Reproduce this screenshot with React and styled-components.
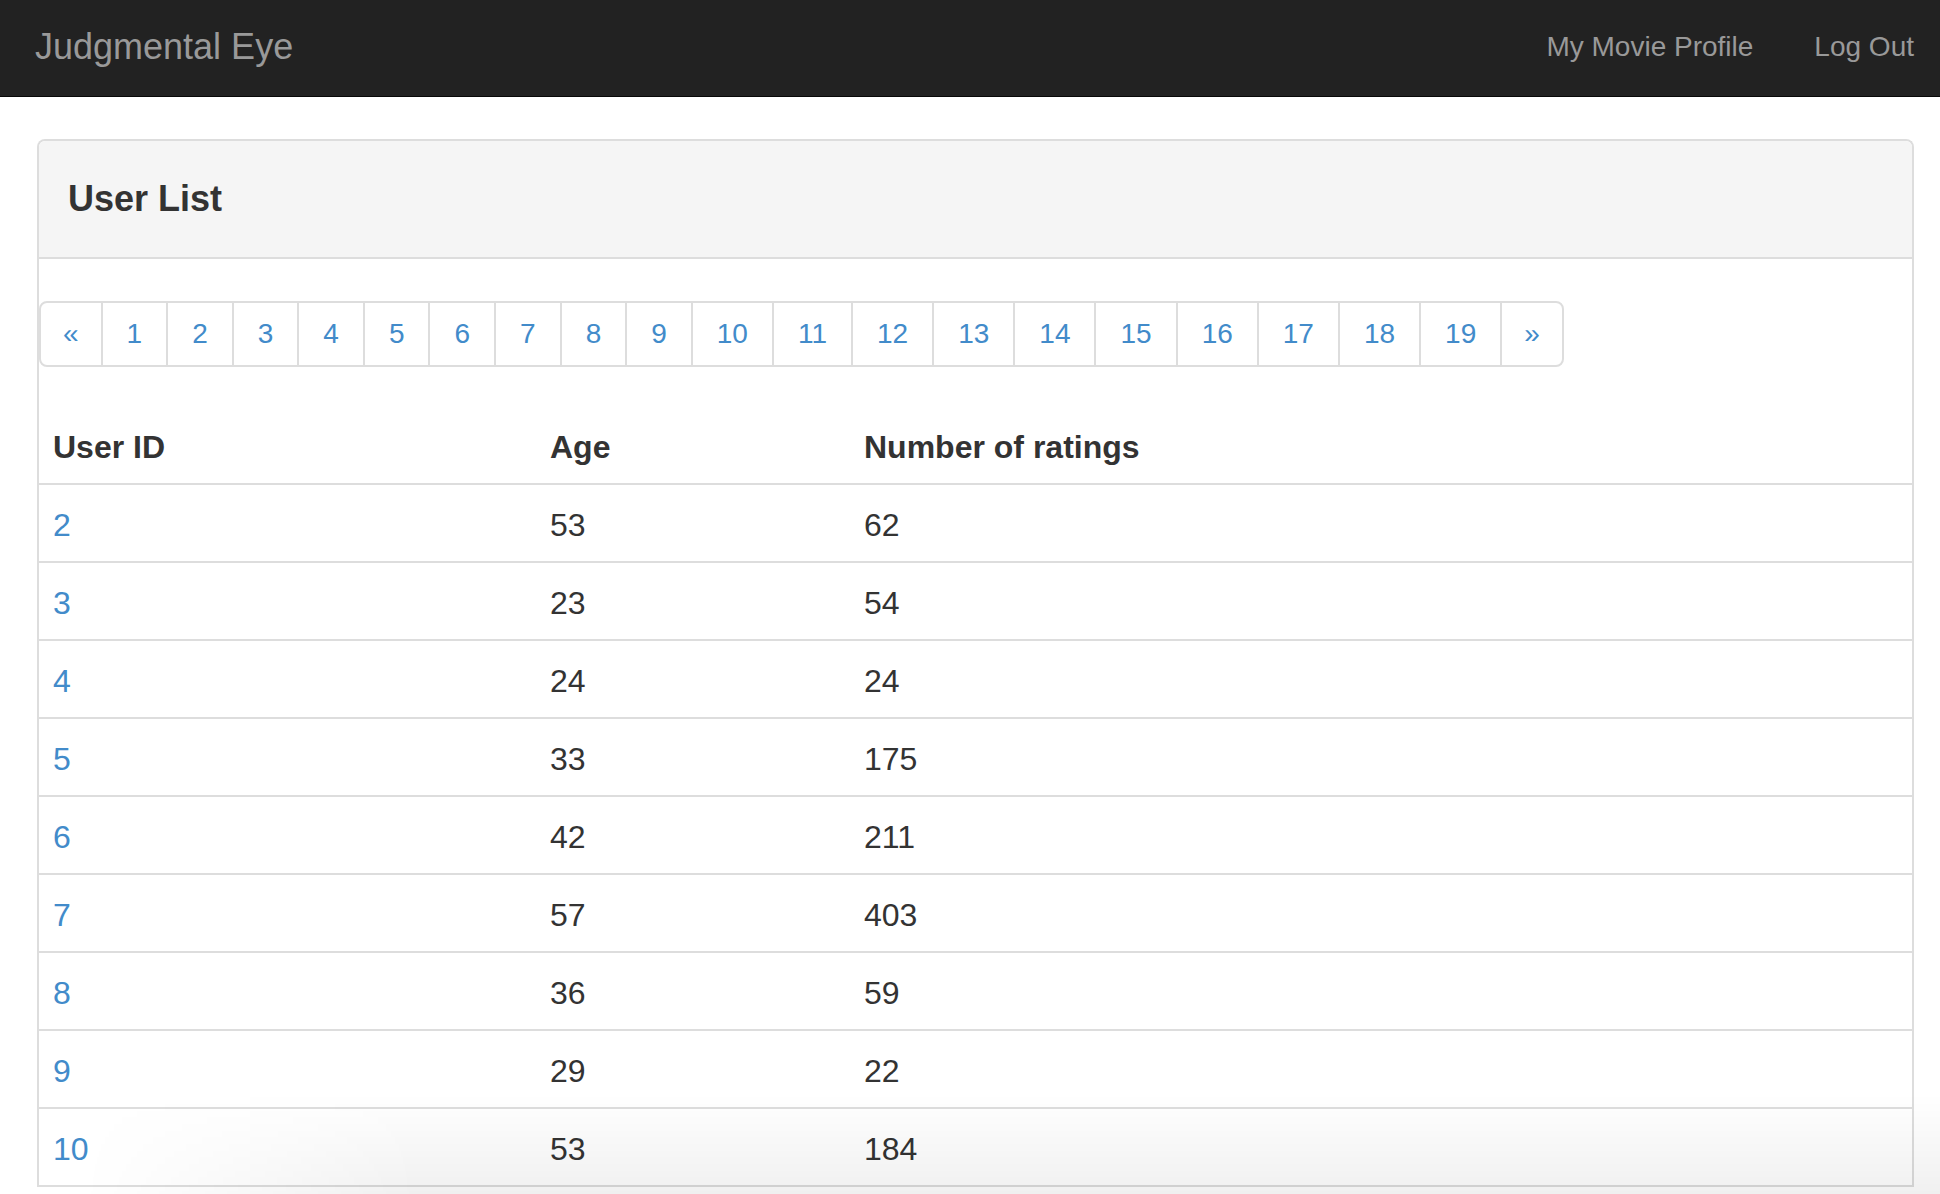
import React from "react";
import styled, { createGlobalStyle } from "styled-components";

const GlobalStyle = createGlobalStyle`
  html, body {
    margin: 0;
    padding: 0;
    overflow: hidden;
    background: #ffffff;
  }
  body {
    font-family: "Liberation Sans", Arial, Helvetica, sans-serif;
    color: #333333;
  }
  * { box-sizing: border-box; }
`;

const Navbar = styled.nav`
  display: flex;
  align-items: center;
  justify-content: space-between;
  height: 97px;
  padding-bottom: 2px;
  background: #222222;
  border-bottom: 1px solid #080808;
`;

const Brand = styled.a`
  padding-left: 35px;
  font-size: 36px;
  color: #999999;
  text-decoration: none;
  white-space: nowrap;
`;

const NavLinks = styled.ul`
  display: flex;
  margin: 0;
  padding: 0 26px 0 0;
  list-style: none;
`;

const NavItem = styled.li`
  padding: 0 0 0 ${(p) => (p.$first ? 0 : 61)}px;
`;

const NavLink = styled.a`
  font-size: 28px;
  color: #999999;
  text-decoration: none;
  white-space: nowrap;
`;

const Main = styled.main`
  padding: 42px 26px 0 37px;
`;

const Panel = styled.section`
  border: 2px solid #dddddd;
  border-bottom: 0;
  border-radius: 8px 8px 0 0;
  background: #ffffff;
  overflow: hidden;
`;

const PanelHeading = styled.header`
  display: flex;
  align-items: center;
  height: 118px;
  padding: 0 29px;
  background: #f5f5f5;
  border-bottom: 2px solid #dddddd;
`;

const PanelTitle = styled.h3`
  margin: 0;
  font-size: 36px;
  font-weight: bold;
  color: #333333;
  line-height: 1;
`;

const Pagination = styled.ul`
  display: inline-flex;
  margin: 42px 0 0 0;
  padding: 0;
  list-style: none;
`;

const PageItem = styled.li`
  margin-left: ${(p) => (p.$first ? 0 : -2)}px;
`;

const PageLink = styled.a`
  display: block;
  padding: 12px ${(p) => (p.$arrow ? 22 : 24)}px;
  font-size: 28px;
  line-height: 38px;
  color: #428bca;
  text-decoration: none;
  background: #ffffff;
  border: 2px solid #dddddd;
  border-radius: ${(p) =>
    p.$first ? "8px 0 0 8px" : p.$last ? "0 8px 8px 0" : "0"};
`;

const Table = styled.table`
  width: 100%;
  margin-top: 40px;
  border-collapse: collapse;
  table-layout: fixed;
  font-size: 32px;
`;

const Th = styled.th`
  width: ${(p) => p.$w || "auto"};
  padding: 18px 14px 14px;
  line-height: 44px;
  text-align: left;
  font-weight: bold;
  color: #333333;
  border-bottom: 2px solid #dddddd;
`;

const Td = styled.td`
  padding: 18px 14px 14px;
  line-height: 44px;
  color: #333333;
  border-bottom: 2px solid #dddddd;
  white-space: nowrap;
`;

const UserLink = styled.a`
  color: #428bca;
  text-decoration: none;
`;

const BottomShade = styled.div`
  position: fixed;
  left: 0;
  right: 0;
  bottom: 0;
  height: 100px;
  pointer-events: none;
  background: linear-gradient(to bottom, rgba(0, 0, 0, 0) 0%, rgba(0, 0, 0, 0.06) 100%);
  -webkit-mask-image: linear-gradient(to right, transparent 80px, #000 420px);
  mask-image: linear-gradient(to right, transparent 80px, #000 420px);
`;

const users = [
  { id: 2, age: 53, ratings: 62 },
  { id: 3, age: 23, ratings: 54 },
  { id: 4, age: 24, ratings: 24 },
  { id: 5, age: 33, ratings: 175 },
  { id: 6, age: 42, ratings: 211 },
  { id: 7, age: 57, ratings: 403 },
  { id: 8, age: 36, ratings: 59 },
  { id: 9, age: 29, ratings: 22 },
  { id: 10, age: 53, ratings: 184 },
];

const pages = Array.from({ length: 19 }, (_, i) => i + 1);

export default function App() {
  return (
    <>
      <GlobalStyle />
      <Navbar>
        <Brand href="#">Judgmental Eye</Brand>
        <NavLinks>
          <NavItem $first>
            <NavLink href="#">My Movie Profile</NavLink>
          </NavItem>
          <NavItem>
            <NavLink href="#">Log Out</NavLink>
          </NavItem>
        </NavLinks>
      </Navbar>
      <Main>
        <Panel>
          <PanelHeading>
            <PanelTitle>User List</PanelTitle>
          </PanelHeading>
          <Pagination>
            <PageItem $first>
              <PageLink href="#" $arrow $first>
                «
              </PageLink>
            </PageItem>
            {pages.map((p) => (
              <PageItem key={p}>
                <PageLink href="#">{p}</PageLink>
              </PageItem>
            ))}
            <PageItem>
              <PageLink href="#" $arrow $last>
                »
              </PageLink>
            </PageItem>
          </Pagination>
          <Table>
            <thead>
              <tr>
                <Th $w="497px">User ID</Th>
                <Th $w="314px">Age</Th>
                <Th>Number of ratings</Th>
              </tr>
            </thead>
            <tbody>
              {users.map((u) => (
                <tr key={u.id}>
                  <Td>
                    <UserLink href="#">{u.id}</UserLink>
                  </Td>
                  <Td>{u.age}</Td>
                  <Td>{u.ratings}</Td>
                </tr>
              ))}
            </tbody>
          </Table>
        </Panel>
      </Main>
      <BottomShade />
    </>
  );
}
